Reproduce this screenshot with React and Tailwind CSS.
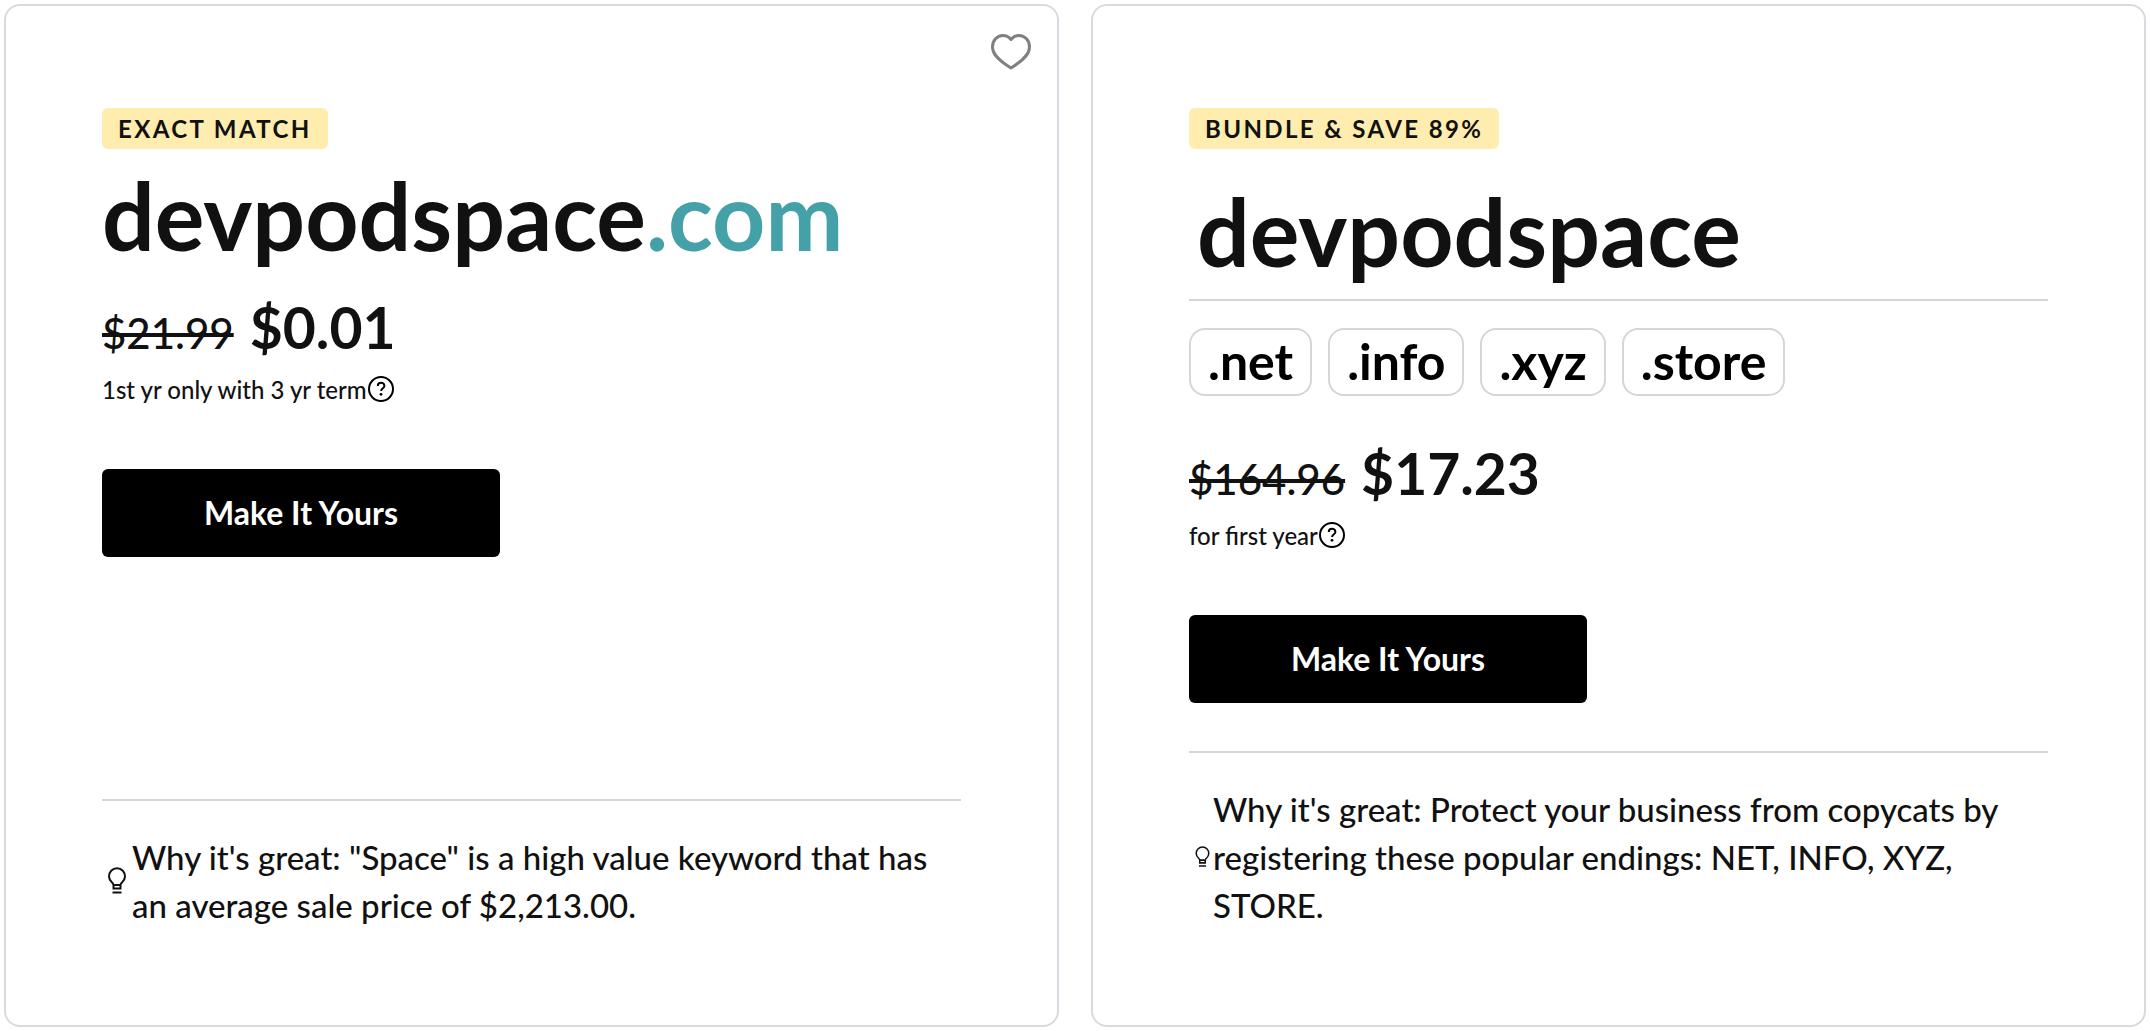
function Heart() {
  return (
    <svg viewBox="0 0 40 36" className="h-9 w-10" fill="none" stroke="#808080" strokeWidth="3" strokeLinejoin="round">
      <path d="M20 34C8 26.500 1.500 20.500 1.500 13 1.500 6.500 6 1.500 12 1.500c3.300 0 6 1.500 8 4 2-2.500 4.700-4 8-4 6 0 10.500 5 10.500 11.500 0 7.500-6.500 13.500-18.500 21z" />
    </svg>
  );
}

function Help() {
  return (
    <svg viewBox="0 0 28 28" className="size-7" fill="none" stroke="#000" strokeWidth="2">
      <circle cx="14" cy="14" r="12" />
      <path d="M10.800 11c0-4.200 6.600-4.200 6.600 0 0 2.300-3.300 2.300-3.300 5" />
      <circle cx="14" cy="19.300" r="1.400" fill="#000" stroke="none" />
    </svg>
  );
}

function Bulb({ className }) {
  return (
    <svg viewBox="0 0 20 28" className={className} fill="none" stroke="#111" strokeWidth="2">
      <path d="M6.500 18c-.2-1.300-.9-2-1.700-2.700a8 8 0 1 1 10.400 0c-.8.700-1.500 1.400-1.700 2.700zM6.500 17.500v4h7v-4M5.500 25.500h9" />
    </svg>
  );
}

function Badge({ children }) {
  return (
    <span className="flex h-[41px] w-fit items-center rounded-md bg-[#feedaf] px-4 text-2xl font-bold tracking-widest">
      {children}
    </span>
  );
}

function Offer({ was, now, note }) {
  return (
    <div>
      <div className="flex items-baseline gap-4">
        <s className="text-[42px] leading-none font-medium decoration-4">{was}</s>
        <span className="text-[57px] leading-[72px] font-bold">{now}</span>
      </div>
      <div className="mt-2 flex h-9 items-center text-2xl leading-9 font-medium">
        <span className="pt-0.5">{note}</span>
        <button type="button" aria-label="Price details">
          <Help />
        </button>
      </div>
      <button type="button" className="mt-[62px] h-[88px] w-[398px] rounded-md bg-black text-[32px] font-bold text-white">
        Make It Yours
      </button>
    </div>
  );
}

function Card({ children }) {
  return (
    <section className="relative flex flex-col rounded-2xl border-2 border-[#d6dbe1] px-24 pt-[102px] pb-24">
      {children}
    </section>
  );
}

function Reason({ icon, children }) {
  return (
    <div className="mt-auto flex items-center border-t-2 border-[#d6d6d6] pt-8">
      {icon}
      <p className="text-[33px] leading-12 font-medium">{children}</p>
    </div>
  );
}

const endings = ['.net', '.info', '.xyz', '.store'];

export default function App() {
  return (
    <main className="grid min-h-screen grid-cols-2 gap-8 bg-white p-1 font-[Lato,sans-serif] text-[#111]">
      <Card>
        <button type="button" aria-label="Save to favorites" className="absolute top-7 right-[26px]">
          <Heart />
        </button>
        <Badge>EXACT MATCH</Badge>
        <h2 className="mt-2.5 mb-5 text-[93px] leading-[112px] font-bold">
          devpodspace<span className="text-[#45a1a8]">.com</span>
        </h2>
        <Offer was="$21.99" now="$0.01" note="1st yr only with 3 yr term" />
        <Reason icon={<Bulb className="mx-[3px] h-7 w-6 shrink-0" />}>
          Why it's great: "Space" is a high value keyword that has an average sale price of $2,213.00.
        </Reason>
      </Card>
      <Card>
        <Badge>BUNDLE &amp; SAVE 89%</Badge>
        <h2 className="mt-[26px] border-b-2 border-[#d6d6d6] pb-3 pl-2 text-[93px] leading-[112px] font-bold">
          devpodspace
        </h2>
        <ul className="mt-[27px] mb-[41px] flex gap-4 text-[50px] font-bold text-black">
          {endings.map((ending) => (
            <li key={ending} className="flex h-[68px] items-center rounded-2xl border-2 border-[#d6d6d6] px-[17px] pb-0.5">
              {ending}
            </li>
          ))}
        </ul>
        <Offer was="$164.96" now="$17.23" note="for first year" />
        <Reason icon={<Bulb className="ml-[3px] h-[22px] w-[21px] shrink-0" />}>
          Why it's great: Protect your business from copycats by registering these popular endings: NET, INFO, XYZ, STORE.
        </Reason>
      </Card>
    </main>
  );
}
